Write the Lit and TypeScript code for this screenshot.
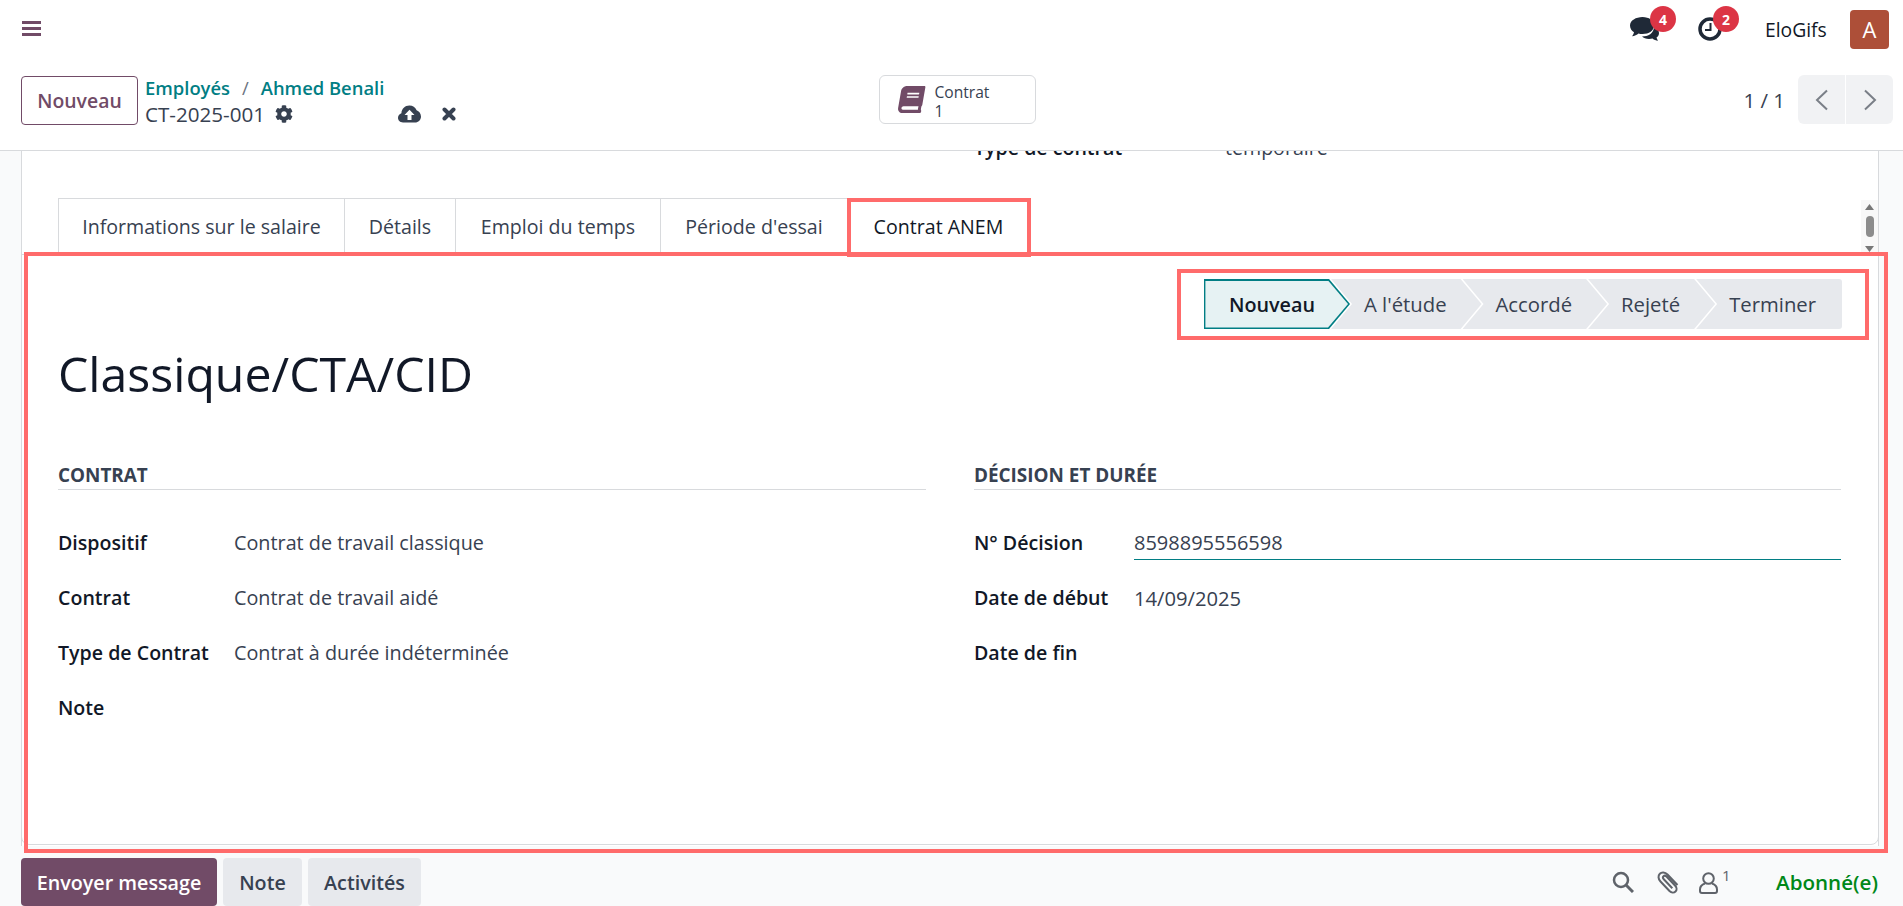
import { LitElement, html, css, svg } from "lit";
import { customElement } from "lit/decorators.js";

const gear = svg`<path d="M487.4 315.7l-42.6-24.6c4.3-23.2 4.3-47 0-70.2l42.6-24.6c4.9-2.8 7.1-8.6 5.5-14-11.1-35.6-30-67.8-54.7-94.6-3.8-4.1-10-5.1-14.8-2.3L380.8 110c-17.9-15.4-38.5-27.3-60.8-35.1V25.8c0-5.6-3.9-10.5-9.4-11.7-36.7-8.2-74.3-7.8-109.2 0-5.5 1.2-9.4 6.1-9.4 11.7V75c-22.2 7.9-42.8 19.8-60.8 35.1L88.7 85.5c-4.9-2.8-11-1.9-14.8 2.3-24.7 26.7-43.6 58.9-54.7 94.6-1.7 5.4.6 11.2 5.5 14L67.3 221c-4.3 23.2-4.3 47 0 70.2l-42.6 24.6c-4.9 2.8-7.1 8.6-5.5 14 11.1 35.6 30 67.8 54.7 94.6 3.8 4.1 10 5.1 14.8 2.3l42.6-24.6c17.9 15.4 38.5 27.3 60.8 35.1v49.2c0 5.6 3.9 10.5 9.4 11.7 36.7 8.2 74.3 7.8 109.2 0 5.5-1.2 9.4-6.1 9.4-11.7v-49.2c22.2-7.9 42.8-19.8 60.8-35.1l42.6 24.6c4.9 2.8 11 1.9 14.8-2.3 24.7-26.7 43.6-58.9 54.7-94.6 1.5-5.5-.7-11.3-5.6-14.1zM256 336c-44.1 0-80-35.9-80-80s35.9-80 80-80 80 35.9 80 80-35.9 80-80 80z"/>`;
const book = svg`<path transform="translate(90 0) skewX(-10)" d="M448 360V24c0-13.3-10.7-24-24-24H96C43 0 0 43 0 96v320c0 53 43 96 96 96h328c13.3 0 24-10.7 24-24v-16c0-7.5-3.5-14.3-8.9-18.7-4.2-15.4-4.2-59.3 0-74.7 5.4-4.3 8.9-11.1 8.9-18.6zM128 134c0-3.3 2.7-6 6-6h212c3.3 0 6 2.7 6 6v20c0 3.3-2.7 6-6 6H134c-3.3 0-6-2.7-6-6v-20zm0 64c0-3.3 2.7-6 6-6h212c3.3 0 6 2.7 6 6v20c0 3.3-2.7 6-6 6H134c-3.3 0-6-2.7-6-6v-20zm253.4 250H96c-17.7 0-32-14.3-32-32 0-17.6 14.4-32 32-32h285.4c-1.9 17.1-1.9 46.9 0 64z"/>`;

const STEPS = ["Nouveau", "A l'étude", "Accordé", "Rejeté", "Terminer"];
const TABS: [string, number][] = [["Informations sur le salaire", 287], ["Détails", 111], ["Emploi du temps", 205], ["Période d'essai", 187], ["Contrat ANEM", 182]];
const LEFT = [["Dispositif", "Contrat de travail classique"], ["Contrat", "Contrat de travail aidé"], ["Type de Contrat", "Contrat à durée indéterminée"], ["Note", ""]];
const RIGHT = [["Date de début", "14/09/2025"], ["Date de fin", ""]];

@customElement("app-root")
export class AppRoot extends LitElement {
  static styles = css`
    :host { display: block; position: relative; height: 906px; overflow: hidden; background: #f9fafb;
      font-family: "Open Sans", "Noto Sans", sans-serif; font-size: 19.6px; color: #374151; }
    * { box-sizing: border-box; }
    .page { display: flex; flex-direction: column; height: 906px; }
    .nav { height: 58px; flex: none; background: #fff; display: flex; align-items: center; padding: 0 14px 0 22px; }
    .nav-left { flex: 1; display: flex; }
    .burger { width: 19px; height: 15px; color: #714b67; display: block; margin-top: -1px; }
    .ico { position: relative; display: flex; }
    .chat { width: 30px; height: 24px; color: #1f2937; margin-top: 0; }
    .clock { width: 24px; height: 24px; color: #1f2937; }
    .ico-chat { margin-right: 40px; left: 2px; }
    .ico-clock { margin-right: 43px; }
    .badge { position: absolute; width: 26px; height: 26px; border-radius: 50%; background: #dc3545; color: #fff;
      font-size: 14px; font-weight: 700; display: flex; align-items: center; justify-content: center; }
    .ico-chat .badge { left: 20px; top: -11px; }
    .ico-clock .badge { left: 15px; top: -11px; }
    .user { color: #111827; font-size: 19.3px; margin-right: 23px; width: 62px; white-space: nowrap; }
    .avatar { width: 39px; height: 39px; border-radius: 4px; background: #ad4f38; color: #fff; font-size: 22px;
      display: flex; align-items: center; justify-content: center; }
    .cp { height: 93px; flex: none; background: #fff; border-bottom: 1px solid #d8dadd; display: grid;
      grid-template-columns: 1fr auto 1fr; align-items: start; padding: 17px 10px 0 21px; }
    .cp-left { display: flex; gap: 7px; }
    .btn-new { width: 117px; height: 49px; margin-top: 1px; border: 1px solid #714b67; border-radius: 4px; color: #714b67; background: #fff;
      display: flex; align-items: center; justify-content: center; font-weight: 600; font-size: 19.4px; }
    .crumbs { padding-top: 0; line-height: 26px; }
    .crumb-top { color: #017e84; font-weight: 600; font-size: 18.4px; white-space: nowrap; display: flex; }
    .crumb-sep { color: #6b7280; font-weight: 400; margin: 0 12px; }
    .crumb-cur { display: flex; align-items: center; color: #374151; white-space: nowrap; font-size: 20.6px; }
    .crumb-name { width: 130px; }
    .i-gear { width: 18px; height: 18px; fill: #374151; margin-right: 105px; }
    .i-cloud { width: 23px; height: 18px; margin-right: 21px; }
    .i-x { width: 14px; height: 14px; }
    .stat { width: 157px; height: 49px; border: 1px solid #d8dadd; border-radius: 6px; display: flex; align-items: center; padding-left: 17px; gap: 8px; }
    .stat svg { width: 30px; height: 27px; fill: #714b67; flex: none; }
    .stat-txt { font-size: 15.6px; line-height: 19px; padding-top: 5px; }
    .cp-right { display: flex; justify-content: flex-end; align-items: center; height: 49px; }
    .count { margin-right: 13px; font-size: 20.5px; }
    .pager { display: flex; gap: 1px; }
    .pager div { width: 47px; height: 49px; background: #f1f2f4; display: flex; align-items: center; justify-content: center; }
    .pager div:first-child { border-radius: 6px 0 0 6px; }
    .pager div:last-child { border-radius: 0 6px 6px 0; }
    .pager svg { width: 14px; height: 22px; fill: none; stroke: #7a7f87; stroke-width: 2; }
    .scroll { flex: 1; min-height: 0; position: relative; overflow: hidden; padding: 0 24px 0 21px; display: flex; flex-direction: column; }
    .sheet { flex: 1; min-height: 0; background: #fff; display: flex; flex-direction: column; border: 1px solid #d8dadd; border-top: 0; border-bottom: 0; }
    .cut { display: flex; height: 24px; margin-top: -15px; line-height: 24px; margin-left: 952px; flex: none; }
    .cut b { color: #111827; font-weight: 600; width: 251px; }
    .tabs { display: flex; padding-left: 36px; margin-top: 38px; flex: none; position: relative; z-index: 1; margin-bottom: -1px; }
    .tab { height: 57px; display: flex; align-items: center; justify-content: center; border: 1px solid #d8dadd; border-left-width: 0; border-bottom-color: #d8dadd; white-space: nowrap; }
    .tab:first-child { border-left-width: 1px; }
    .tab.on { color: #111827; border-bottom-color: #fff; }
    .panel { flex: 1; border-top: 1px solid #d8dadd; border-bottom: 1px solid #d8dadd; margin: 0 -1px; border-radius: 0 0 8px 8px; border-left: 1px solid #d8dadd; border-right: 1px solid #d8dadd; padding: 24px 36px 0; height: 591px; flex: none; }
    .status { display: flex; justify-content: flex-end; height: 50px; }
    .step { position: relative; height: 50px; background: #e7e9ed; margin-left: -19px; padding: 0 35px 0 33px; display: flex; align-items: center; font-weight: 500; font-size: 20.3px; color: #374151; white-space: nowrap;
      clip-path: polygon(0 0, calc(100% - 21px) 0, 100% 50%, calc(100% - 21px) 100%, 0 100%, 21px 50%); }
    .step span { position: relative; }
    .step:first-child { margin-left: 0; padding-left: 25px; color: #111827; font-weight: 600; font-size: 19.8px; background: #017e84; clip-path: polygon(0 0, calc(100% - 21px) 0, 100% 50%, calc(100% - 21px) 100%, 0 100%); }
    .step:first-child::before { content: ""; position: absolute; inset: 1.5px 2px 1.5px 1.5px; background: #e6f2f3;
      clip-path: polygon(0 0, calc(100% - 20px) 0, 100% 50%, calc(100% - 20px) 100%, 0 100%); }
    .step:last-child { padding-right: 26px; border-radius: 0 3px 3px 0; clip-path: polygon(0 0, 100% 0, 100% 100%, 0 100%, 21px 50%); }
    h1 { margin: 0; font-weight: 400; font-size: 48.2px; line-height: 66px; color: #111827; padding-top: 11px; height: 75px; }
    .cols { display: grid; grid-template-columns: 868px 867px; column-gap: 48px; margin-top: 59px; }
    .sec { font-weight: 700; font-size: 18.9px; color: #374151; height: 27px; line-height: 24px; border-bottom: 1px solid #d8dadd; margin-bottom: 36px; text-transform: uppercase; }
    .row { display: flex; height: 55px; line-height: 34px; }
    .lbl { color: #111827; font-weight: 600; width: 176px; flex: none; white-space: nowrap; }
    .r .lbl { width: 160px; }
    .val { flex: 1; font-size: 19.8px; }
    .r .val { font-size: 20.2px; }
    .input { flex: 1; height: 34px; font-size: 20px; border-bottom: 1px solid #017e84; }
    .chatter { height: 60px; flex: none; display: flex; align-items: flex-end; padding: 0 25px 0 21px; }
    .cbtn { height: 48px; border-radius: 4px; background: #e7e9ed; display: flex; align-items: center; justify-content: center; font-weight: 600; font-size: 19.7px; margin-right: 6px; }
    .cbtn.p { background: #714b67; color: #fff; width: 196px; }
    .cbtn.n { width: 79px; }
    .cbtn.a { width: 113px; }
    .chat-right { margin-left: auto; display: flex; align-items: center; height: 48px; color: #5f636a; }
    .chat-right svg { fill: none; stroke: #5f636a; stroke-width: 2; display: block; }
    .i-s { width: 22px; height: 22px; margin-right: 23px; }
    .i-c { width: 23px; height: 24px; margin-right: 19px; }
    .i-u { width: 19px; height: 22px; margin-right: 4px; margin-top: 2px; }
    .sup { font-size: 15px; margin-top: -14px; margin-right: 46px; width: 8px; }
    .follow { color: #008818; font-weight: 600; font-size: 20.6px; }
    .sb { position: absolute; left: 1861px; top: 200px; width: 17px; height: 53px; background: #f8f8f8; display: flex; flex-direction: column; align-items: center; }
    .sb svg { width: 9px; height: 6px; fill: #777; flex: none; margin-top: 4px; }
    .sb i { width: 8px; height: 21px; border-radius: 4px; background: #8c8c8c; margin: 6px 0 5px; }
    .mark { position: absolute; border: 4px solid #ff6b6b; pointer-events: none; z-index: 5; }
    .m-tab { left: 847px; top: 198px; width: 184px; height: 59px; }
    .m-main { left: 24px; top: 252px; width: 1864px; height: 601px; }
    .m-status { left: 1177px; top: 269px; width: 692px; height: 71px; }
  `;

  render() {
    return html`
      <div class="page">
        <div class="nav">
          <div class="nav-left">
            <svg class="burger" viewBox="0 0 19 15" fill="currentColor"><rect width="19" height="3" y="0"/><rect width="19" height="3" y="6"/><rect width="19" height="3" y="12"/></svg>
          </div>
          <div class="ico ico-chat">
            <svg class="chat" viewBox="0 0 30 24" fill="currentColor">
              <path d="M19 9c5 0 10 3 10 7 0 2-1 3.500-2.500 4.600.3 1.200 1 2.400 1.500 3.200-2-.2-4-1-5.500-2.300-1 .3-2 .5-3.500.5-3 0-5.500-1-7-2.500 6 0 12-3 12-10z"/>
              <path d="M12.500 0C19 0 24 3.500 24 8.500S19 17 12.500 17c-1.500 0-2.800-.2-4-.6C7 17.800 4.500 19 2 19.300c.8-1 1.800-2.500 2-4C1.600 13.800 0 11.300 0 8.500 0 3.500 6 0 12.500 0z"/>
            </svg>
            <span class="badge">4</span>
          </div>
          <div class="ico ico-clock">
            <svg class="clock" viewBox="0 0 24 24" fill="none" stroke="currentColor"><circle cx="12" cy="12" r="10" stroke-width="3.500"/><path d="M12.500 6v7H7" stroke-width="2"/></svg>
            <span class="badge">2</span>
          </div>
          <div class="user">EloGifs</div>
          <div class="avatar">A</div>
        </div>
        <div class="cp">
          <div class="cp-left">
            <div class="btn-new">Nouveau</div>
            <div class="crumbs">
              <div class="crumb-top">Employés<span class="crumb-sep">/</span>Ahmed Benali</div>
              <div class="crumb-cur">
                <span class="crumb-name">CT-2025-001</span>
                <svg class="i-gear" viewBox="0 0 512 512">${gear}</svg>
                <svg class="i-cloud" viewBox="0 0 23 18"><path fill="#374151" d="M5 17.500C2 17.500 0 15.400 0 12.800c0-2.200 1.400-4 3.400-4.600C3.600 3.800 7 .5 11.400.5c3.300 0 6 1.900 7.200 4.700C21 6 23 8.600 23 11.500c0 3.400-2.600 6-6 6z"/><path fill="#fff" d="M11.500 4.800l5 5.200h-3v5h-4v-5h-3z"/></svg>
                <svg class="i-x" viewBox="0 0 14 14"><path d="M2.500 2.500l9 9M11.500 2.500l-9 9" stroke="#374151" stroke-width="4" stroke-linecap="round"/></svg>
              </div>
            </div>
          </div>
          <div class="stat">
            <svg viewBox="0 0 560 512">${book}</svg>
            <div class="stat-txt">Contrat<br />1</div>
          </div>
          <div class="cp-right">
            <div class="count">1 / 1</div>
            <div class="pager">
              <div><svg viewBox="0 0 14 22"><path d="M12 1.500L2 11l10 9.500"/></svg></div>
              <div><svg viewBox="0 0 14 22"><path d="M2 1.500L12 11 2 20.500"/></svg></div>
            </div>
          </div>
        </div>
        <div class="scroll">
          <div class="sheet">
            <div class="cut"><b>Type de contrat</b><span>temporaire</span></div>
            <div class="tabs">${TABS.map(([t, w], i) => html`<div class="tab ${i === 4 ? "on" : ""}" style="width:${w}px">${t}</div>`)}</div>
            <div class="panel">
              <div class="status">${STEPS.map((s) => html`<div class="step"><span>${s}</span></div>`)}</div>
              <h1>Classique/CTA/CID</h1>
              <div class="cols">
                <div>
                  <div class="sec">Contrat</div>
                  ${LEFT.map(([l, v]) => html`<div class="row"><div class="lbl">${l}</div><div class="val">${v}</div></div>`)}
                </div>
                <div class="r">
                  <div class="sec">Décision et durée</div>
                  <div class="row"><div class="lbl">N° Décision</div><div class="input">8598895556598</div></div>
                  ${RIGHT.map(([l, v]) => html`<div class="row"><div class="lbl">${l}</div><div class="val">${v}</div></div>`)}
                </div>
              </div>
            </div>
          </div>
        </div>
        <div class="chatter">
          <div class="cbtn p">Envoyer message</div>
          <div class="cbtn n">Note</div>
          <div class="cbtn a">Activités</div>
          <div class="chat-right">
            <svg class="i-s" viewBox="0 0 22 22"><circle cx="9" cy="9" r="7" stroke-width="2.500"/><path d="M14 14l7 7" stroke-width="3"/></svg>
            <svg class="i-c" viewBox="0 0 23 24"><path d="M20.500 15L10.500 4.500C8 2 4.500 2 2.800 3.800 1 5.600 1 9 3.500 11.500l9 9.500c2 2 4.500 2 6 .5s1.500-4-.5-6L9.500 6.500c-1-1-2.300-1-3-.3s-.7 2 .3 3l8.500 9"/></svg>
            <svg class="i-u" viewBox="0 0 19 22"><circle cx="9.500" cy="6.500" r="5.300"/><path d="M6 11.500C3 12.500 1 14.500 1 17.500V19c0 1.200.8 2 2 2h13c1.200 0 2-.8 2-2v-1.500c0-3-2-5-5-6"/></svg>
            <span class="sup">1</span>
            <span class="follow">Abonné(e)</span>
          </div>
        </div>
      </div>
      <div class="sb">
        <svg viewBox="0 0 9 6"><path d="M4.500 0L9 6H0z"/></svg><i></i><svg viewBox="0 0 9 6"><path d="M0 0h9L4.500 6z"/></svg>
      </div>
      <div class="mark m-tab"></div>
      <div class="mark m-main"></div>
      <div class="mark m-status"></div>
    `;
  }
}
